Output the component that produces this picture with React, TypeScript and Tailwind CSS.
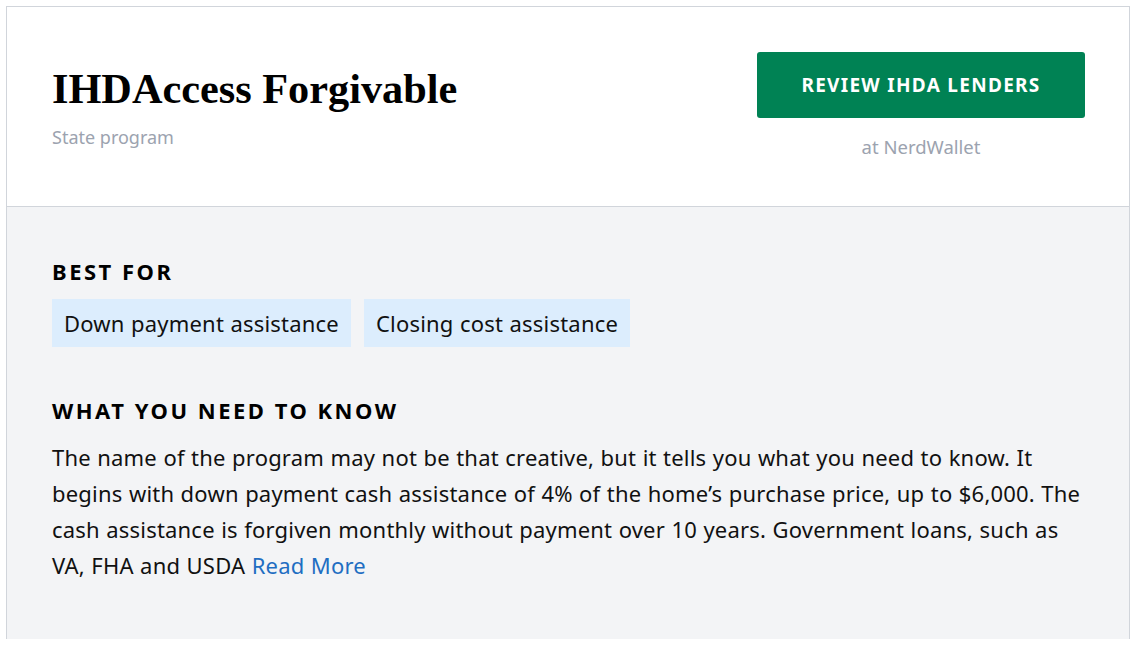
export default function App() {
  const body = "text-[22px] tracking-[0.2px] [word-spacing:0.5px] text-[#111]";
  return (
    <div className="w-[1135px] h-[645px] bg-white pt-[6px] pl-[6px] pr-[5px]" style={{ fontFamily: '"Noto Sans", "Open Sans", sans-serif' }}>
      <div className="h-[633px] border-x border-t border-[#d1d5db] overflow-hidden flex flex-col">
        <div className="h-[200px] shrink-0 bg-white border-b border-[#d1d5db] flex justify-between pl-[45px] pr-[44px] pt-[45px]">
          <div className="pt-[13px]">
            <h1 className="text-[42.3px] leading-[48px] font-bold text-black" style={{ fontFamily: '"Liberation Serif", "Times New Roman", serif' }}>
              IHDAccess Forgivable
            </h1>
            <p className="mt-[12px] text-[18px] leading-[24px] text-[#9ca3af]">State program</p>
          </div>
          <div className="flex flex-col items-center">
            <button className="w-[328px] h-[66px] rounded-[3px] bg-[#008254] text-white text-[19px] font-bold tracking-[1.3px] uppercase">
              Review IHDA Lenders
            </button>
            <span className="mt-[17px] text-[18.5px] leading-[24px] text-[#9ca3af]">at NerdWallet</span>
          </div>
        </div>
        <div className="flex-1 bg-[#f3f4f6] pl-[45px] pr-[44px] pt-[50px]">
          <h2 className="text-[22px] leading-[28px] font-bold tracking-[2.5px] text-black uppercase">Best for</h2>
          <div className="mt-[14px] flex gap-[13px]">
            <span className={`h-[48px] px-[12px] flex items-center bg-[#dcedfd] ${body}`}>Down payment assistance</span>
            <span className={`h-[48px] px-[12px] flex items-center bg-[#dcedfd] ${body}`}>Closing cost assistance</span>
          </div>
          <h2 className="mt-[49px] text-[22px] leading-[28px] font-bold tracking-[2.5px] text-black uppercase">What you need to know</h2>
          <p className={`mt-[15px] leading-[36px] ${body}`}>
            The name of the program may not be that creative, but it tells you what you need to know. It begins with down payment cash assistance of 4% of the home’s purchase price, up to $6,000. The cash assistance is forgiven monthly without payment over 10 years. Government loans, such as VA, FHA and USDA{" "}
            <a className="text-[#1f6ec2]">Read More</a>
          </p>
        </div>
      </div>
    </div>
  );
}
